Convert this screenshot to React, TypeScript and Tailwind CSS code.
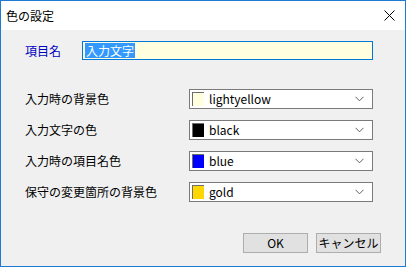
import React from "react";

const font = { fontFamily: '"Noto Sans CJK JP", "Noto Sans", sans-serif' };

function Chevron() {
  return (
    <svg width="9" height="6" viewBox="0 0 9 6" className="shrink-0">
      <path d="M0.5 0.8 L4.5 4.8 L8.5 0.8" fill="none" stroke="#606060" strokeWidth="1" />
    </svg>
  );
}

function Combo({ color, name }: { color: string; name: string }) {
  return (
    <div className="w-[184px] h-[20px] border border-[#7a7a7a] bg-white flex items-center pl-[2px] pr-[8px]">
      <div
        className="w-[12px] h-[14px] border-l border-t border-[#6d6d6d] shrink-0"
        style={{ backgroundColor: color }}
      />
      <span className="ml-[5px] text-[12px] leading-none text-black flex-1">{name}</span>
      <Chevron />
    </div>
  );
}

function Row({ label, color, name }: { label: string; color: string; name: string }) {
  return (
    <div className="flex items-center h-[20px]">
      <div className="w-[164px] text-[12px] leading-none text-black">{label}</div>
      <Combo color={color} name={name} />
    </div>
  );
}

export default function App() {
  return (
    <div className="w-[407px] h-[268px] bg-white" style={font}>
      <div className="w-[406px] h-[267px] border border-[#1e7ad4] flex flex-col bg-[#f0f0f0]">
        <div className="h-[29px] bg-white flex items-center justify-between pl-[5px] pr-[10px] shrink-0">
          <span className="text-[12px] leading-none text-black">色の設定</span>
          <svg width="11" height="11" viewBox="0 0 11 11">
            <path d="M0.5 0.5 L10.5 10.5 M10.5 0.5 L0.5 10.5" stroke="#000" strokeWidth="1" />
          </svg>
        </div>
        <div className="flex-1 flex flex-col pl-[24px]">
          <div className="flex items-center mt-[11px] h-[19px]">
            <div className="w-[57px] text-[12px] leading-none text-[#0000c0]">項目名</div>
            <div className="w-[291px] h-[19px] border border-[#0078d7] bg-[#ffffe0] flex items-center pl-[2px]">
              <span className="bg-[#3399ff] text-white text-[12px] leading-[15px] px-[1px]">入力文字</span>
            </div>
          </div>
          <div className="flex flex-col gap-[11px] mt-[29px]">
            <Row label="入力時の背景色" color="#ffffe0" name="lightyellow" />
            <Row label="入力文字の色" color="#000000" name="black" />
            <Row label="入力時の項目名色" color="#0000ff" name="blue" />
            <Row label="保守の変更箇所の背景色" color="#ffd700" name="gold" />
          </div>
          <div className="flex justify-end gap-[8px] mt-[31px] pr-[24px]">
            <button className="w-[65px] h-[20px] border border-[#adadad] bg-[#e1e1e1] text-[12px] leading-none text-black">
              OK
            </button>
            <button className="w-[65px] h-[20px] border border-[#adadad] bg-[#e1e1e1] text-[12px] leading-none text-black">
              キャンセル
            </button>
          </div>
        </div>
      </div>
    </div>
  );
}
